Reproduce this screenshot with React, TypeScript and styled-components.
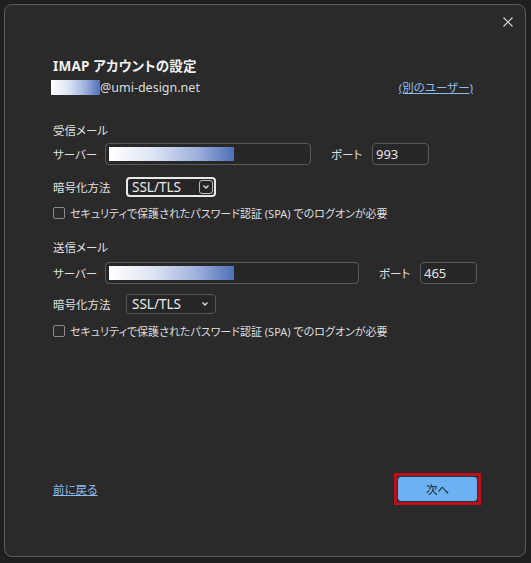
import styled, { createGlobalStyle, css } from 'styled-components'

const GlobalStyle = createGlobalStyle`
  html, body {
    margin: 0;
    padding: 0;
    background: #1f1f1f;
  }
  body {
    font-family: "Noto Sans", "Noto Sans CJK JP", sans-serif;
    font-feature-settings: "palt";
    color: #e2e2e2;
  }
`

const Dialog = styled.div`
  box-sizing: border-box;
  width: 522px;
  height: 553px;
  margin: 4px 0 0 4px;
  background: #2a2a2a;
  border: 1px solid #5c5c5c;
  border-radius: 8px;
  display: flex;
  flex-direction: column;
`

const CloseRow = styled.div`
  height: 36px;
  display: flex;
  justify-content: flex-end;
  align-items: flex-end;
  padding-right: 12px;
`

const CloseButton = styled.button`
  width: 10px;
  height: 10px;
  padding: 0;
  margin-bottom: 14px;
  border: none;
  background: transparent;
  display: flex;
  cursor: pointer;
`

const Body = styled.div`
  padding: 0 48px;
  flex: 1;
  display: flex;
  flex-direction: column;
`

const Title = styled.h1`
  margin: 15px 0 0;
  font-size: 13.5px;
  line-height: 20px;
  font-weight: 700;
  letter-spacing: 0.2px;
  color: #f0f0f0;
`

const AccountRow = styled.div`
  display: flex;
  align-items: center;
  justify-content: space-between;
  height: 20px;
  margin-top: 1px;
  padding-right: 4px;
`

const Account = styled.div`
  display: flex;
  align-items: center;
  font-size: 12.5px;
  color: #dcdcdc;
  margin-left: -2px;
`

const Masked = styled.span<{ $w: number; $h: number }>`
  display: inline-block;
  flex-shrink: 0;
  width: ${(p) => p.$w}px;
  height: ${(p) => p.$h}px;
  background: linear-gradient(90deg, #ffffff 0%, #dde4f3 35%, #9fb1dc 70%, #4f6fb8 100%);
`

const Link = styled.a`
  font-size: 11.5px;
  color: #8cbcec;
  text-decoration: underline;
  cursor: pointer;
`

const SectionLabel = styled.div<{ $top: number }>`
  margin-top: ${(p) => p.$top}px;
  font-size: 11.5px;
  line-height: 20px;
  color: #e0e0e0;
`

const FieldRow = styled.div<{ $top: number }>`
  display: flex;
  align-items: center;
  margin-top: ${(p) => p.$top}px;
  white-space: nowrap;
`

const Label = styled.span<{ $w: number }>`
  width: ${(p) => p.$w}px;
  flex-shrink: 0;
  font-size: 11.5px;
  color: #e0e0e0;
`

const TextBox = styled.div<{ $w: number }>`
  box-sizing: border-box;
  flex-shrink: 0;
  width: ${(p) => p.$w}px;
  height: 22px;
  border: 1px solid #5a5a5a;
  border-radius: 4px;
  background: #272727;
  display: flex;
  align-items: center;
  padding-left: 3px;
  font-size: 13px;
  color: #e4e4e4;
`

const PortLabel = styled.span`
  margin: 0 10px 0 20px;
  width: 31px;
  flex-shrink: 0;
  font-size: 11.5px;
  color: #e0e0e0;
`

const Select = styled.div<{ $focused?: boolean }>`
  box-sizing: border-box;
  width: 90px;
  height: 20px;
  border-radius: 4px;
  display: flex;
  align-items: center;
  justify-content: space-between;
  padding: 0 3px 0 5px;
  font-size: 13.5px;
  color: #ececec;
  background: #262626;
  ${(p) =>
    p.$focused
      ? css`
          border: 2px solid #e8e8e8;
          padding-left: 4px;
          padding-right: 1px;
        `
      : css`
          border: 1px solid #575757;
        `}
`

const Chevron = styled.span<{ $boxed?: boolean }>`
  width: 14px;
  height: 14px;
  display: flex;
  align-items: center;
  justify-content: center;
  border-radius: 3px;
  ${(p) =>
    p.$boxed &&
    css`
      border: 1px solid #bdbdbd;
      box-sizing: border-box;
    `}
`

const CheckRow = styled.label<{ $top: number }>`
  display: flex;
  align-items: center;
  gap: 5px;
  margin-top: ${(p) => p.$top}px;
  height: 16px;
  font-size: 11px;
  color: #dedede;
  white-space: nowrap;
`

const CheckBox = styled.span`
  box-sizing: border-box;
  flex-shrink: 0;
  width: 12px;
  height: 12px;
  border: 1px solid #8a8a8a;
  border-radius: 2px;
`

const Footer = styled.div`
  display: flex;
  align-items: center;
  justify-content: space-between;
  padding: 0 44px 51px 48px;
`

const Highlight = styled.div`
  border: 3px solid #b8111b;
  display: flex;
`

const NextButton = styled.button`
  width: 81px;
  height: 26px;
  border: 1px solid #1d3550;
  border-radius: 4px;
  background: #6cb2f2;
  color: #152230;
  font-family: inherit;
  font-size: 11.5px;
  cursor: pointer;
`

function ChevronIcon() {
  return (
    <svg width="8" height="6" viewBox="0 0 8 6">
      <path d="M1.5 1.5 L4 4 L6.5 1.5" stroke="#e0e0e0" strokeWidth="1.3" fill="none" />
    </svg>
  )
}

type ServerProps = {
  title: string
  titleTop: number
  serverWidth: number
  port: string
  focused?: boolean
}

function ServerSection({ title, titleTop, serverWidth, port, focused }: ServerProps) {
  return (
    <>
      <SectionLabel $top={titleTop}>{title}</SectionLabel>
      <FieldRow $top={focused ? 2 : 4}>
        <Label $w={52}>サーバー</Label>
        <TextBox $w={serverWidth}>
          <Masked $w={125} $h={14} />
        </TextBox>
        <PortLabel>ポート</PortLabel>
        <TextBox $w={57}>{port}</TextBox>
      </FieldRow>
      <FieldRow $top={focused ? 12 : 10}>
        <Label $w={73}>暗号化方法</Label>
        <Select $focused={focused}>
          SSL/TLS
          <Chevron $boxed={focused}>
            <ChevronIcon />
          </Chevron>
        </Select>
      </FieldRow>
      <CheckRow $top={focused ? 8 : 9}>
        <CheckBox />
        セキュリティで保護されたパスワード認証 (SPA) でのログオンが必要
      </CheckRow>
    </>
  )
}

export default function App() {
  return (
    <>
      <GlobalStyle />
      <Dialog>
        <CloseRow>
          <CloseButton aria-label="閉じる">
            <svg width="10" height="10" viewBox="0 0 10 10">
              <path d="M0.5 0.5 L9.5 9.5 M9.5 0.5 L0.5 9.5" stroke="#d8d8d8" strokeWidth="1.1" />
            </svg>
          </CloseButton>
        </CloseRow>
        <Body>
          <Title>IMAP アカウントの設定</Title>
          <AccountRow>
            <Account>
              <Masked $w={49} $h={15} />
              @umi-design.net
            </Account>
            <Link>(別のユーザー)</Link>
          </AccountRow>
          <ServerSection title="受信メール" titleTop={24} serverWidth={206} port="993" focused />
          <ServerSection title="送信メール" titleTop={17} serverWidth={254} port="465" />
        </Body>
        <Footer>
          <Link>前に戻る</Link>
          <Highlight>
            <NextButton>次へ</NextButton>
          </Highlight>
        </Footer>
      </Dialog>
    </>
  )
}
